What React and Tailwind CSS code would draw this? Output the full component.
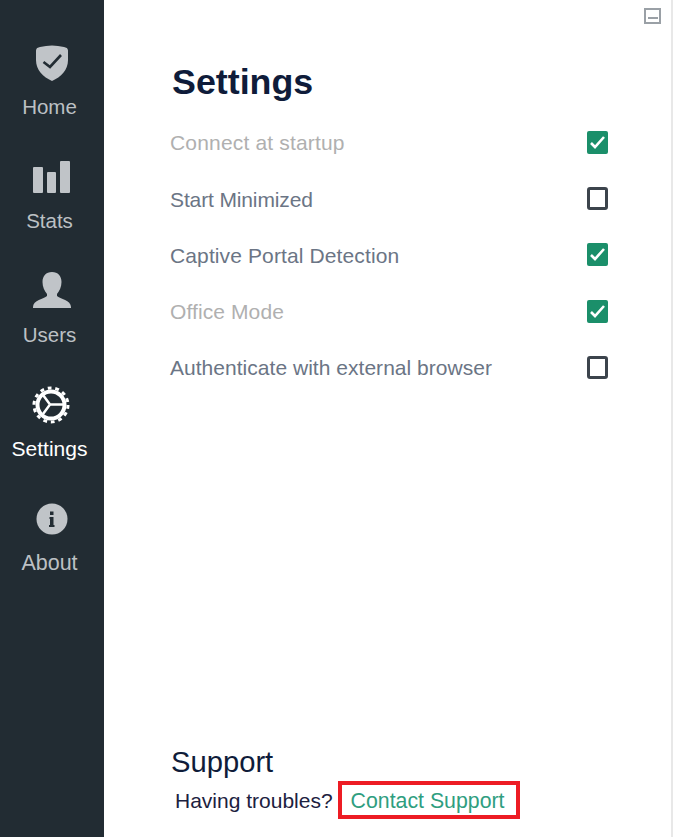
import React from "react";

const ShieldIcon = () => (
  <svg width="34" height="38" viewBox="0 0 34 38">
    <path d="M5 3c8-2 16-2 24 0 2 .5 4 1 4 4v9c0 10-7 17-16 21C8 33 1 26 1 16V7c0-3 2-3.500 4-4z" fill="#c0c4c8" />
    <path d="M8.500 18l6.500 5 11-12" fill="none" stroke="#222c33" strokeWidth="2.600" />
  </svg>
);

const StatsIcon = () => (
  <svg width="38" height="34" viewBox="0 0 38 34">
    <rect x="0" y="7" width="10" height="26" rx="1" fill="#c0c4c8" />
    <rect x="14" y="12" width="9" height="21" rx="1" fill="#c0c4c8" />
    <rect x="27" y="1" width="10" height="32" rx="1" fill="#c0c4c8" />
  </svg>
);

const UserIcon = () => (
  <svg width="38" height="38" viewBox="0 0 38 38">
    <path d="M19 0c6 0 9.500 4 9.500 10 0 5-2 9-4.500 12v2c3 3 14 4 14 11v1H0v-1c0-7 11-8 14-11v-2c-2.500-3-4.500-7-4.500-12C9.500 4 13 0 19 0z" fill="#c0c4c8" />
  </svg>
);

const GearIcon = () => (
  <svg className="mr-[3px]" width="38" height="38" viewBox="0 0 38 38">
    <circle cx="19" cy="19" r="17" fill="none" stroke="#fff" strokeWidth="3" strokeDasharray="3.800 3.830" />
    <circle cx="19" cy="19" r="13.500" fill="none" stroke="#fff" strokeWidth="4" />
    <path d="M18 18.500l-7-9.500M18 18.500h13M18 18.500l-7 9.500" fill="none" stroke="#fff" strokeWidth="2.500" />
  </svg>
);

const InfoIcon = () => (
  <svg width="32" height="32" viewBox="0 0 32 32">
    <circle cx="16" cy="16" r="15.500" fill="#c0c4c8" />
    <rect x="14" y="8.500" width="3.500" height="3.500" fill="#222c33" />
    <path d="M13.500 14H17.500v8h1v2h-5.500v-2h1v-6h-.5z" fill="#222c33" />
  </svg>
);

const navItems = [
  { label: "Home", icon: <ShieldIcon />, textClass: "text-[20.500px] text-[#bcc0c4]" },
  { label: "Stats", icon: <StatsIcon />, textClass: "text-[20.500px] text-[#bcc0c4]" },
  { label: "Users", icon: <UserIcon />, textClass: "text-[20.500px] text-[#bcc0c4]" },
  { label: "Settings", icon: <GearIcon />, textClass: "text-[21px] text-white" },
  { label: "About", icon: <InfoIcon />, textClass: "text-[21.500px] text-[#bcc0c4]" },
];

const settings = [
  { label: "Connect at startup", checked: true, color: "text-[#b0b0b0]", tracking: "tracking-[0.17px]" },
  { label: "Start Minimized", checked: false, color: "text-[#6b7585]", tracking: "tracking-[-0.13px]" },
  { label: "Captive Portal Detection", checked: true, color: "text-[#6b7585]", tracking: "tracking-[0.12px]" },
  { label: "Office Mode", checked: true, color: "text-[#b0b0b0]", tracking: "tracking-[0.1px]" },
  { label: "Authenticate with external browser", checked: false, color: "text-[#6b7585]", tracking: "tracking-[0.03px]" },
];

const Checkbox = ({ checked }) =>
  checked ? (
    <div className="flex h-[23px] w-[21px] items-center justify-center rounded-[2px] bg-[#1b8f6a]">
      <svg width="17" height="15" viewBox="0 0 17 15">
        <path d="M2 8l4 4 9-10" fill="none" stroke="#fff" strokeWidth="2.600" />
      </svg>
    </div>
  ) : (
    <div className="h-[23px] w-[21px] rounded-[3px] border-[3px] border-[#3c444c] bg-white" />
  );

const App = () => {
  return (
    <div className="flex h-[837px] w-[673px] overflow-hidden bg-white font-['Liberation_Sans',sans-serif]">
      <aside className="flex h-full w-[104px] shrink-0 flex-col items-center bg-[#222c33] pt-[44px]">
        {navItems.map((item) => (
          <div key={item.label} className="flex h-[114px] w-full flex-col items-center">
            <div className="flex h-[38px] items-center justify-center">{item.icon}</div>
            <span className={`mr-[5px] mt-[13px] leading-[24px] ${item.textClass}`}>{item.label}</span>
          </div>
        ))}
      </aside>

      <main className="relative flex flex-1 flex-col border-r-2 border-[#e8e8e8] pl-[66px] pr-[63px]">
        <button className="absolute right-[10px] top-[8px] flex h-[16px] w-[17px] items-center justify-center border-2 border-[#9aa0a6]">
          <span className="mt-[3px] h-[2px] w-[10px] bg-[#9aa0a6]" />
        </button>

        <h1 className="ml-[2px] mt-[61px] text-[35.800px] font-bold leading-[42px] text-[#0f1c3a]">Settings</h1>

        <div className="mt-[12px] flex flex-col">
          {settings.map((row) => (
            <div key={row.label} className="flex h-[56.200px] items-center justify-between">
              <span className={`text-[21px] ${row.color} ${row.tracking}`}>{row.label}</span>
              <div className="mb-[1px]">
                <Checkbox checked={row.checked} />
              </div>
            </div>
          ))}
        </div>

        <div className="mt-auto pb-[18px]">
          <h2 className="ml-[1px] text-[29.200px] leading-[34px] text-[#0f1c3a]">Support</h2>
          <div className="mt-[2px] flex items-center">
            <span className="ml-[5px] pt-[1px] text-[21px] text-[#1c2140]">Having troubles?</span>
            <span className="ml-[5px] flex h-[38px] w-[182px] items-center border-4 border-[#ed1c24] pl-[9px] pt-[3px] text-[21.300px] text-[#2f9e7f]">
              Contact Support
            </span>
          </div>
        </div>
      </main>
    </div>
  );
};

export default App;
